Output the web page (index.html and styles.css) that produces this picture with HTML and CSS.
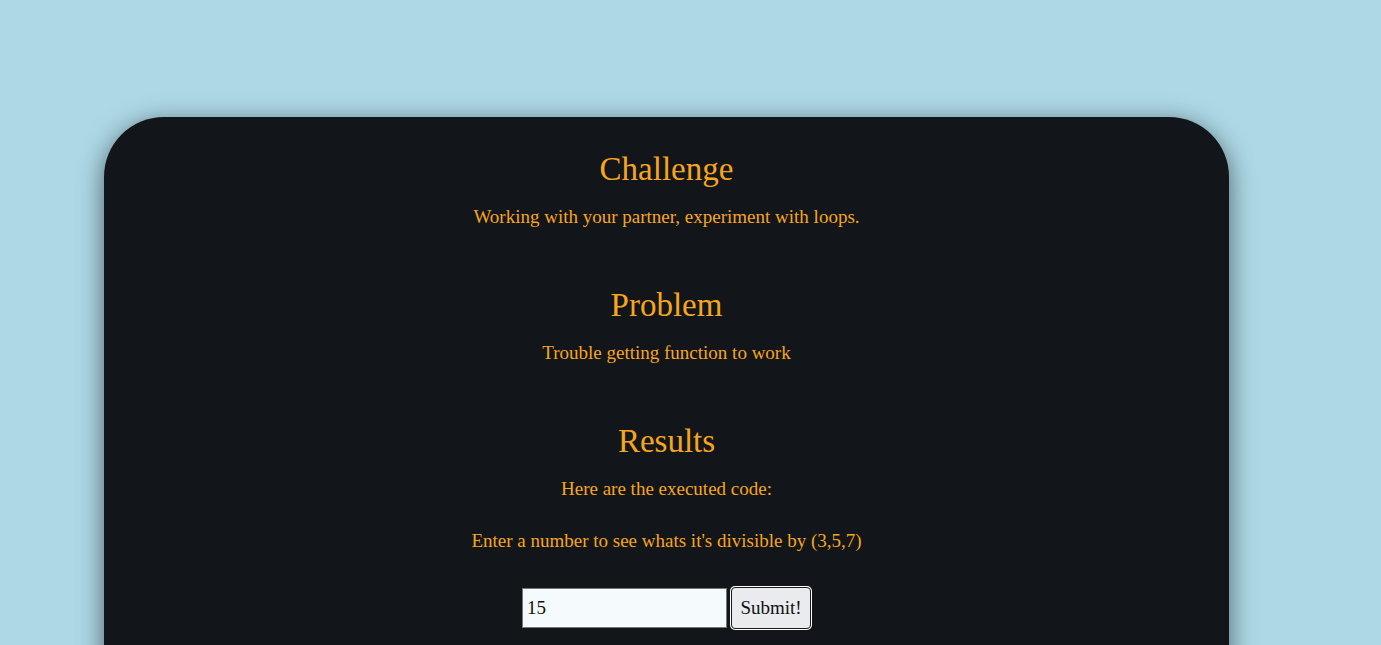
FILE: index.html
```html
<!DOCTYPE html>
<html lang="en">
<head>
<meta charset="utf-8">
<title>Loops Challenge</title>
<link rel="stylesheet" href="styles.css">
</head>
<body>
<main class="card">
  <section class="section">
    <h2 class="title">Challenge</h2>
    <p class="text">Working with your partner, experiment with loops.</p>
  </section>
  <section class="section">
    <h2 class="title">Problem</h2>
    <p class="text">Trouble getting function to work</p>
  </section>
  <section class="section">
    <h2 class="title">Results</h2>
    <p class="text">Here are the executed code:</p>
    <p class="text prompt">Enter a number to see whats it's divisible by (3,5,7)</p>
    <form class="form">
      <input class="field" type="text" value="15">
      <button class="btn" type="button">Submit!</button>
    </form>
  </section>
</main>
</body>
</html>
```

FILE: styles.css
```css
html, body {
  margin: 0;
  padding: 0;
}
body {
  background: #add8e6;
  font-family: "Liberation Serif", "Times New Roman", serif;
  overflow: hidden;
}
.card {
  margin: 117px 0 0 104px;
  width: 1125px;
  min-height: 700px;
  box-sizing: border-box;
  padding-top: 32px;
  background: #121519;
  border-radius: 60px 60px 0 0;
  box-shadow: 0 6px 26px rgba(0, 0, 0, 0.55);
  color: #f6a61e;
  text-align: center;
}
.section {
  margin-bottom: 56px;
}
.title {
  margin: 0 0 16px;
  font-size: 33px;
  line-height: 40px;
  font-weight: normal;
}
.text {
  margin: 0;
  font-size: 19px;
  line-height: 24px;
}
.prompt {
  margin-top: 28px;
}
.form {
  margin-top: 34px;
  display: flex;
  justify-content: center;
  align-items: center;
  gap: 4px;
}
.field {
  width: 205px;
  height: 40px;
  box-sizing: border-box;
  margin: 0;
  padding: 0 4px;
  border: 1px solid #767676;
  background: #f5fbfc;
  font-family: "Liberation Serif", "Times New Roman", serif;
  font-size: 19px;
  color: #111;
}
.btn {
  width: 80px;
  height: 42px;
  box-sizing: border-box;
  margin: 0;
  padding: 0;
  border: 1px solid #1a1a1a;
  border-radius: 4px;
  box-shadow: 0 0 0 1px #ffffff;
  background: #e9ebee;
  font-family: "Liberation Serif", "Times New Roman", serif;
  font-size: 19px;
  color: #111;
}
```
